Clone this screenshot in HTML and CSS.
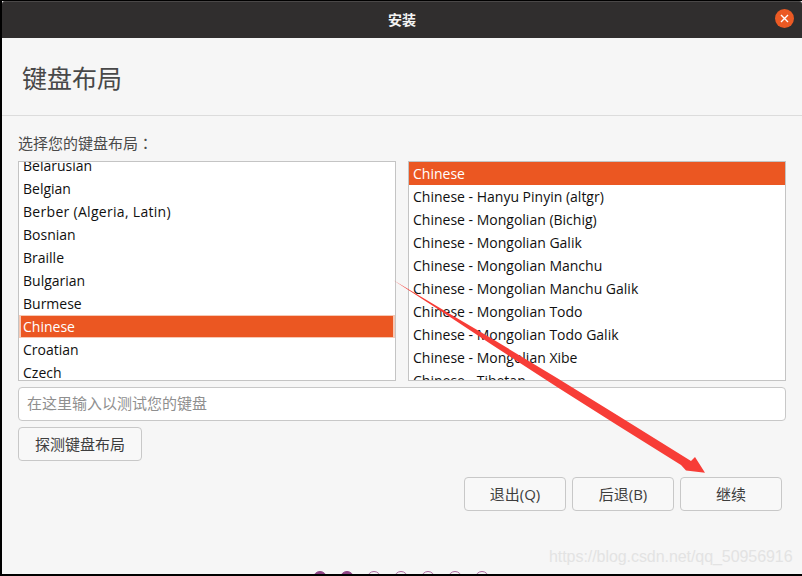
FILE: index.html
```html
<!DOCTYPE html>
<html lang="zh">
<head>
<meta charset="utf-8">
<title>安装</title>
<link rel="stylesheet" href="styles.css">
</head>
<body>
<div class="window">
  <header class="titlebar">
    <span class="title">安装</span>
    <span class="close" aria-label="关闭">
      <svg width="9" height="9" viewBox="0 0 9 9"><path d="M1 1L8 8M8 1L1 8" stroke="#fff" stroke-width="1.4" fill="none"/></svg>
    </span>
  </header>
  <div class="heading"><h1>键盘布局</h1></div>
  <main class="content">
    <div class="label">选择您的键盘布局<span class="colon" lang="zh-Hant">：</span></div>
    <div class="lists">
      <div class="list">
        <ul class="rows rows-left">
          <li>Belarusian</li>
          <li>Belgian</li>
          <li class="wide">Berber (Algeria, Latin)</li>
          <li>Bosnian</li>
          <li>Braille</li>
          <li>Bulgarian</li>
          <li>Burmese</li>
          <li class="sel-soft">Chinese</li>
          <li>Croatian</li>
          <li>Czech</li>
        </ul>
      </div>
      <div class="list">
        <ul class="rows">
          <li class="sel">Chinese</li>
          <li>Chinese - Hanyu Pinyin (altgr)</li>
          <li>Chinese - Mongolian (Bichig)</li>
          <li>Chinese - Mongolian Galik</li>
          <li>Chinese - Mongolian Manchu</li>
          <li>Chinese - Mongolian Manchu Galik</li>
          <li>Chinese - Mongolian Todo</li>
          <li>Chinese - Mongolian Todo Galik</li>
          <li>Chinese - Mongolian Xibe</li>
          <li>Chinese - Tibetan</li>
        </ul>
      </div>
    </div>
    <input class="entry" type="text" placeholder="在这里输入以测试您的键盘">
    <button class="btn btn-detect" type="button">探测键盘布局</button>
    <div class="actions">
      <button class="btn btn-action" type="button">退出(Q)</button>
      <button class="btn btn-action" type="button">后退(B)</button>
      <button class="btn btn-action" type="button">继续</button>
    </div>
  </main>
  <div class="dots">
    <i class="dot on"></i><i class="dot on"></i><i class="dot"></i><i class="dot"></i><i class="dot"></i><i class="dot"></i><i class="dot"></i>
  </div>
</div>
<div class="watermark">https://blog.csdn.net/qq_50956916</div>
<svg class="arrow" width="802" height="576" viewBox="0 0 802 576">
  <path d="M393 280L450 314L490 337.500L557 378L617 415L691 461L695 457L705 472.700L686 470.500L681 465L617 425L557 387L490 343.500L450 317Z" fill="#f73d37"/>
</svg>
</body>
</html>
```
FILE: styles.css
```css
* { box-sizing: border-box; }
html, body { margin: 0; height: 100%; }
body {
  width: 802px;
  height: 576px;
  overflow: hidden;
  background: #000;
  position: relative;
  font-family: "Open Sans", "Noto Sans CJK SC", sans-serif;
}
.window {
  margin: 1px 0 0 2px;
  width: 800px;
  height: 573px;
  background: #f6f6f6;
  display: flex;
  flex-direction: column;
  overflow: hidden;
}
.titlebar {
  height: 37px;
  flex: none;
  background: #302e2e;
  border-top: 1px solid #4a4848;
  border-radius: 3px 3px 0 0;
  padding-bottom: 2px;
  display: flex;
  align-items: center;
  justify-content: center;
  position: relative;
}
.title {
  color: #f4f4f4;
  font: 700 14px "Noto Sans CJK SC", sans-serif;
}
.close {
  position: absolute;
  right: 8px;
  top: 7px;
  width: 19px;
  height: 19px;
  border-radius: 50%;
  background: #eb5a24;
  display: flex;
  align-items: center;
  justify-content: center;
}
.heading {
  height: 78px;
  flex: none;
  border-bottom: 1px solid #dcdcdc;
  padding-left: 20px;
  display: flex;
  align-items: center;
}
h1 {
  margin: 0;
  font: 400 25px/30px "Noto Sans CJK SC", sans-serif;
  color: #484848;
}
.content {
  flex: 1;
  padding: 0 16px;
  position: relative;
}
.label {
  margin-top: 17px;
  height: 28px;
  line-height: 20px;
  font-size: 15px;
  font-family: "Noto Sans CJK SC", sans-serif;
  color: #4a4a4a;
}
.colon { font-family: "Noto Sans CJK TC", sans-serif; }
.lists {
  display: grid;
  grid-template-columns: 378px 378px;
  column-gap: 12px;
}
.list {
  height: 220px;
  background: #fff;
  border: 1px solid #c4c4c4;
  overflow: hidden;
}
.rows {
  list-style: none;
  margin: 0;
  padding: 0;
}
.rows-left { margin-top: -8px; }
.rows li {
  height: 23px;
  line-height: 23px;
  padding-left: 4px;
  font-size: 14px;
  color: #101010;
}
.rows .wide { letter-spacing: 0.3px; }
.rows .sel {
  background: #eb5722;
  color: #fff;
}
.rows .sel-soft {
  background: #eb5722;
  color: #fff;
  padding-left: 2px;
  border-style: solid;
  border-color: #f6c9b5;
  border-width: 1px 2px;
  line-height: 21px;
}
.entry {
  display: block;
  width: 768px;
  height: 34px;
  margin-top: 6px;
  padding: 0 8px 3px;
  border: 1px solid #c8c8c8;
  border-radius: 4px;
  background: #fff;
  font: 15px "Noto Sans CJK SC", sans-serif;
  outline: none;
}
.entry::placeholder { color: #8f8f8f; opacity: 1; }
.btn {
  height: 34px;
  border: 1px solid #c8c8c8;
  border-radius: 4px;
  background: #f8f8f8;
  font: 15px "Open Sans", "Noto Sans CJK SC", sans-serif;
  color: #3d3d3d;
  padding: 0 0 2px;
}
.btn-detect {
  display: block;
  width: 124px;
  margin-top: 6px;
}
.actions {
  display: flex;
  justify-content: flex-end;
  gap: 6px;
  margin: 16px 4px 0 0;
}
.btn-action { width: 102px; }
.dots {
  position: absolute;
  left: 313px;
  top: 571px;
  display: flex;
  gap: 13px;
}
.dot {
  width: 14px;
  height: 14px;
  border: 1px solid #a9679c;
  border-radius: 50%;
  flex: none;
}
.dot.on { background: #8e4585; border-color: #8e4585; }
.watermark {
  position: absolute;
  left: 549px;
  top: 548px;
  font: 16px/18px "Liberation Sans", sans-serif;
  letter-spacing: -0.06px;
  color: #e3e3e3;
  white-space: nowrap;
}
.arrow {
  position: absolute;
  left: 0;
  top: 0;
  pointer-events: none;
}
body::after {
  content: "";
  position: absolute;
  left: 0;
  bottom: 0;
  width: 100%;
  height: 2px;
  background: #000;
}
```
